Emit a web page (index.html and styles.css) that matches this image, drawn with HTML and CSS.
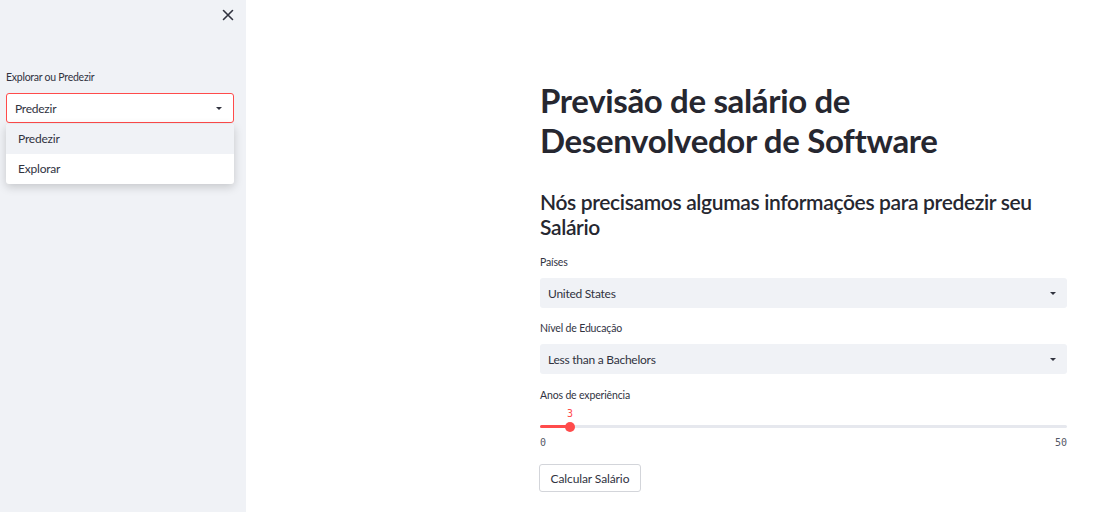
FILE: index.html
```html
<!DOCTYPE html>
<html lang="pt">
<head>
<meta charset="utf-8">
<title>Previsão de salário</title>
<link rel="stylesheet" href="styles.css">
</head>
<body>
<div class="app">
  <aside class="sidebar">
    <div class="sidebar-top">
      <button class="close-btn" aria-label="Fechar">
        <svg width="12" height="12" viewBox="0 0 12 12"><path d="M1.5 1.5 L10.5 10.5 M10.5 1.5 L1.5 10.5" stroke="#31333f" stroke-width="1.6" stroke-linecap="round"/></svg>
      </button>
    </div>
    <div class="sb-content">
      <label class="label sb-label">Explorar ou Predezir</label>
      <div class="select select-open">
        <span>Predezir</span>
        <span class="caret"></span>
      </div>
      <ul class="menu">
        <li class="menu-item active">Predezir</li>
        <li class="menu-item">Explorar</li>
      </ul>
    </div>
  </aside>
  <main class="main">
    <div class="block">
      <h1 class="title">Previsão de salário de Desenvolvedor de Software</h1>
      <h2 class="subtitle">Nós precisamos algumas informações para predezir seu Salário</h2>

      <div class="field">
        <label class="label">Países</label>
        <div class="select select-grey"><span>United States</span><span class="caret"></span></div>
      </div>
      <div class="field">
        <label class="label">Nível de Educação</label>
        <div class="select select-grey"><span>Less than a Bachelors</span><span class="caret"></span></div>
      </div>
      <div class="field slider-field">
        <label class="label">Anos de experiência</label>
        <div class="slider">
          <div class="slider-value" style="left: 5.7%">3</div>
          <div class="track"><div class="fill" style="width: 5.7%"></div><div class="thumb" style="left: 5.7%"></div></div>
          <div class="ticks"><span>0</span><span>50</span></div>
        </div>
      </div>
      <button class="btn">Calcular Salário</button>
    </div>
  </main>
</div>
</body>
</html>
```

FILE: styles.css
```css
* { box-sizing: border-box; }
html, body { margin: 0; padding: 0; }
body {
  font-family: "Lato", "Noto Sans", sans-serif;
  color: #31333f;
  background: #fff;
  width: 1112px;
  height: 512px;
  overflow: hidden;
}
.app { display: flex; height: 512px; }

.sidebar {
  width: 246px;
  flex: 0 0 246px;
  background: #f0f2f6;
  height: 100%;
}
.sidebar-top {
  display: flex;
  justify-content: flex-end;
  padding: 9px 6px 0 0;
  height: 70px;
}
.close-btn {
  border: 0;
  background: transparent;
  padding: 0;
  width: 12px;
  height: 12px;
  margin-right: 6px;
  display: flex;
}
.sb-content { padding: 0 12px 0 6px; }

.label {
  display: block;
  font-size: 10.5px;
  line-height: 14px;
  color: #31333f;
  margin-bottom: 9px;
  letter-spacing: -0.15px;
}
.sb-label { margin-bottom: 9px; letter-spacing: -0.25px; }

.select {
  height: 30px;
  border-radius: 3px;
  display: flex;
  align-items: center;
  justify-content: space-between;
  padding: 0 11px 0 8px;
  font-size: 12px;
  letter-spacing: -0.25px;
  color: #31333f;
}
.select-open {
  background: #fff;
  border: 1px solid #ff4b4b;
}
.select-grey {
  background: #f0f2f6;
}
.caret {
  width: 0;
  height: 0;
  border-left: 3px solid transparent;
  border-right: 3px solid transparent;
  border-top: 3px solid #31333f;
}

.menu {
  list-style: none;
  margin: 1px 0 0 0;
  padding: 0;
  background: #fff;
  border-radius: 3px;
  box-shadow: 0 3px 10px rgba(0,0,0,0.18);
  overflow: hidden;
}
.menu-item {
  height: 30px;
  line-height: 30px;
  padding-left: 12px;
  font-size: 12px;
  letter-spacing: -0.2px;
  color: #31333f;
}
.menu-item.active { background: #f0f2f6; }

.main { flex: 1; display: flex; justify-content: flex-end; padding-right: 45px; }
.block { width: 527px; padding-top: 80px; }

.title {
  margin: 0;
  font-size: 33px;
  line-height: 40px;
  font-weight: 700;
  color: #262730;
  letter-spacing: -0.35px;
}
.subtitle {
  margin: 29px 0 0 0;
  font-size: 21px;
  line-height: 25px;
  font-weight: 600;
  color: #262730;
  letter-spacing: -0.35px;
}

.field { margin-top: 13px; }
.subtitle + .field { margin-top: 16px; }
.slider-field { margin-top: 14px; }

.slider { position: relative; padding-top: 14px; }
.slider-value {
  position: absolute;
  top: -3px;
  transform: translateX(-50%);
  font-family: "DejaVu Sans Mono", monospace;
  font-size: 10px;
  color: #ff4b4b;
}
.track {
  position: relative;
  height: 3px;
  background: #e6e8ee;
  border-radius: 2px;
}
.fill { height: 3px; background: #ff4b4b; border-radius: 2px; }
.thumb {
  position: absolute;
  top: -3.5px;
  width: 10px;
  height: 10px;
  margin-left: -5px;
  border-radius: 50%;
  background: #ff4b4b;
}
.ticks {
  display: flex;
  justify-content: space-between;
  font-family: "DejaVu Sans Mono", monospace;
  font-size: 10px;
  color: #555867;
  margin-top: 9px;
}

.btn {
  margin-top: 16px;
  margin-left: -1px;
  font-family: inherit;
  font-size: 12px;
  letter-spacing: -0.1px;
  color: #31333f;
  background: #fff;
  border: 1px solid #d3d5da;
  border-radius: 3px;
  height: 28px;
  padding: 0 10.5px;
}
```
